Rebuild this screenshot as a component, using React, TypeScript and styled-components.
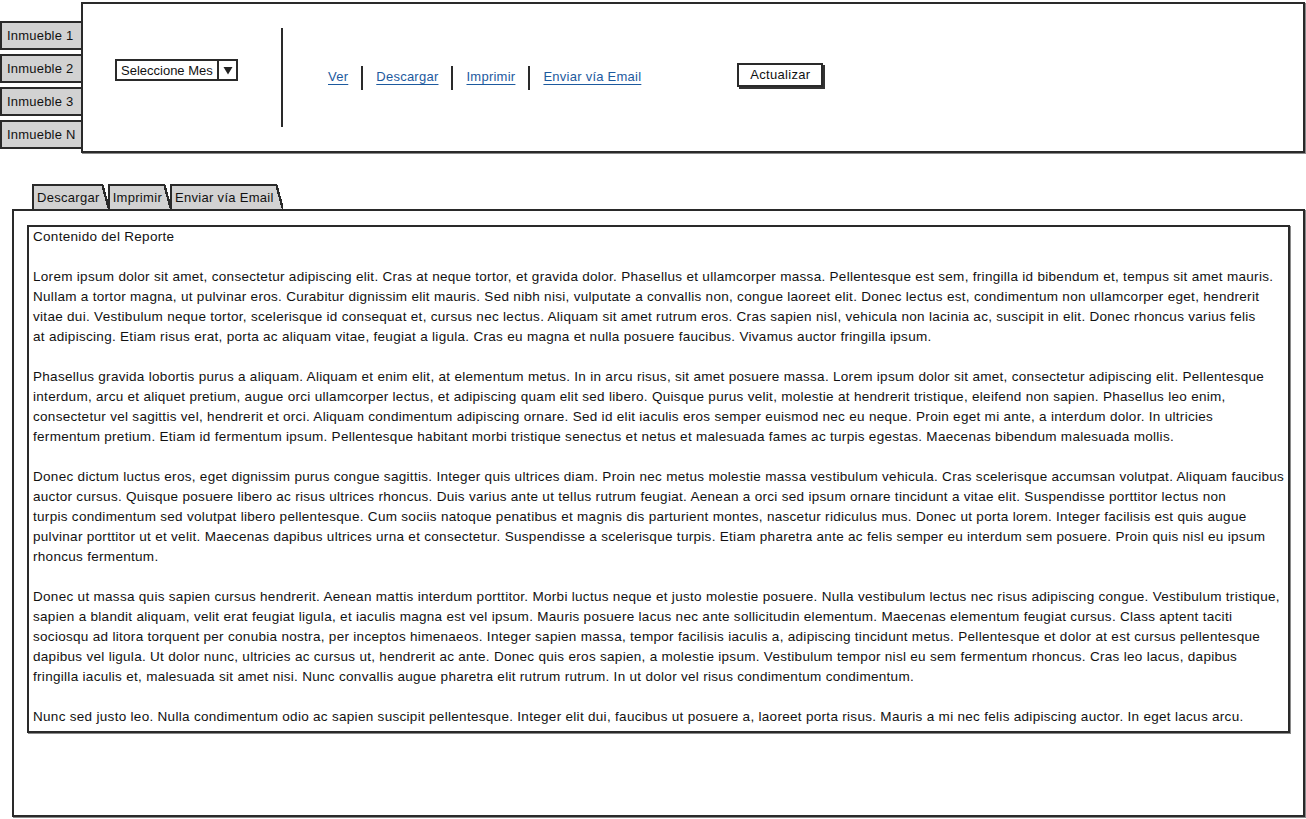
import styled, { createGlobalStyle } from "styled-components"

const GlobalStyle = createGlobalStyle`
  body {
    margin: 0;
    background: #fff;
    font-family: "Liberation Sans", Arial, sans-serif;
    color: #111;
  }
`

const ink = "#2a2a2a"
const tabGray = "#d2d2d2"

const Page = styled.div`
  width: 1306px;
  height: 819px;
  overflow: hidden;
  font-size: 13px;
  letter-spacing: 0.2px;
`

const Header = styled.div`
  display: flex;
  align-items: flex-start;
`

const SideTabs = styled.div`
  width: 81px;
  margin-top: 21px;
  display: flex;
  flex-direction: column;
  gap: 4px;
`

const SideTab = styled.div`
  height: 29px;
  box-sizing: border-box;
  border: 2px solid ${ink};
  border-right: none;
  background: ${tabGray};
  display: flex;
  align-items: center;
  padding-left: 5px;
  white-space: nowrap;
`

const TopPanel = styled.div`
  margin-top: 2px;
  width: 1224px;
  height: 151px;
  box-sizing: border-box;
  border: 2px solid ${ink};
  box-shadow: 1px 1px 0 #8a8a8a;
  display: flex;
  align-items: center;
  padding-left: 32px;
`

const Select = styled.div`
  display: flex;
  align-items: stretch;
  height: 22px;
  width: 123px;
  box-sizing: border-box;
  border: 2px solid ${ink};
  margin-bottom: 15px;
  letter-spacing: 0;
`

const SelectLabel = styled.span`
  flex: 1;
  display: flex;
  align-items: center;
  padding-left: 4px;
  white-space: nowrap;
`

const SelectArrow = styled.span`
  width: 17px;
  border-left: 2px solid ${ink};
  display: flex;
  align-items: center;
  justify-content: center;
`

const Divider = styled.div`
  width: 2px;
  height: 99px;
  background: ${ink};
  margin: 0 45px 0 43px;
`

const Links = styled.div`
  display: flex;
  align-items: center;
  gap: 13px;
  letter-spacing: 0.25px;
  margin-bottom: 3px;
`

const Link = styled.a`
  color: #1d5a9e;
  text-decoration: underline;
  text-underline-offset: 3px;
  cursor: pointer;
`

const Sep = styled.span`
  width: 2px;
  height: 24px;
  margin-top: 4px;
  background: ${ink};
`

const Button = styled.button`
  margin-left: 96px;
  margin-bottom: 6px;
  height: 24px;
  width: 86px;
  box-sizing: border-box;
  border: 2px solid ${ink};
  background: #fff;
  box-shadow: 2px 2px 0 #333;
  font-family: inherit;
  font-size: 13px;
  letter-spacing: 0.3px;
  color: #111;
  padding: 0;
`

const TabRow = styled.div`
  margin-top: 31px;
  padding-left: 32px;
  display: flex;
  height: 25px;
`

const Tab = styled.div`
  position: relative;
  height: 25px;
  box-sizing: border-box;
  border-top: 2px solid ${ink};
  border-left: 2px solid ${ink};
  background: ${tabGray};
  padding: 4px 2px 0 3px;
  margin-right: 6px;
  letter-spacing: 0.3px;
  white-space: nowrap;

  &::after {
    content: "";
    position: absolute;
    top: -2px;
    right: -7px;
    width: 7px;
    height: 25px;
    background: linear-gradient(
      to top right,
      ${tabGray} calc(50% - 1.2px),
      ${ink} calc(50% - 1.2px),
      ${ink} calc(50% + 1.2px),
      transparent calc(50% + 1.2px)
    );
  }
`

const ContentPanel = styled.div`
  margin-left: 12px;
  width: 1293px;
  height: 608px;
  box-sizing: border-box;
  border: 2px solid ${ink};
  box-shadow: 1px 1px 0 #8a8a8a;
  padding: 14px 13px 0 13px;
`

const TextBox = styled.div`
  height: 508px;
  box-sizing: border-box;
  border: 2px solid ${ink};
  box-shadow: 1px 1px 0 #8a8a8a;
  padding: 0 4px;
  font-size: 13.5px;
  letter-spacing: 0.3px;
  line-height: 20px;
`

const Paragraph = styled.div`
  margin-bottom: 20px;
  &:last-child {
    margin-bottom: 0;
  }
`

const Line = styled.div`
  white-space: nowrap;
`

const report: string[][] = [
  ["Contenido del Reporte"],
  [
    "Lorem ipsum dolor sit amet, consectetur adipiscing elit. Cras at neque tortor, et gravida dolor. Phasellus et ullamcorper massa. Pellentesque est sem, fringilla id bibendum et, tempus sit amet mauris.",
    "Nullam a tortor magna, ut pulvinar eros. Curabitur dignissim elit mauris. Sed nibh nisi, vulputate a convallis non, congue laoreet elit. Donec lectus est, condimentum non ullamcorper eget, hendrerit",
    "vitae dui. Vestibulum neque tortor, scelerisque id consequat et, cursus nec lectus. Aliquam sit amet rutrum eros. Cras sapien nisl, vehicula non lacinia ac, suscipit in elit. Donec rhoncus varius felis",
    "at adipiscing. Etiam risus erat, porta ac aliquam vitae, feugiat a ligula. Cras eu magna et nulla posuere faucibus. Vivamus auctor fringilla ipsum.",
  ],
  [
    "Phasellus gravida lobortis purus a aliquam. Aliquam et enim elit, at elementum metus. In in arcu risus, sit amet posuere massa. Lorem ipsum dolor sit amet, consectetur adipiscing elit. Pellentesque",
    "interdum, arcu et aliquet pretium, augue orci ullamcorper lectus, et adipiscing quam elit sed libero. Quisque purus velit, molestie at hendrerit tristique, eleifend non sapien. Phasellus leo enim,",
    "consectetur vel sagittis vel, hendrerit et orci. Aliquam condimentum adipiscing ornare. Sed id elit iaculis eros semper euismod nec eu neque. Proin eget mi ante, a interdum dolor. In ultricies",
    "fermentum pretium. Etiam id fermentum ipsum. Pellentesque habitant morbi tristique senectus et netus et malesuada fames ac turpis egestas. Maecenas bibendum malesuada mollis.",
  ],
  [
    "Donec dictum luctus eros, eget dignissim purus congue sagittis. Integer quis ultrices diam. Proin nec metus molestie massa vestibulum vehicula. Cras scelerisque accumsan volutpat. Aliquam faucibus",
    "auctor cursus. Quisque posuere libero ac risus ultrices rhoncus. Duis varius ante ut tellus rutrum feugiat. Aenean a orci sed ipsum ornare tincidunt a vitae elit. Suspendisse porttitor lectus non",
    "turpis condimentum sed volutpat libero pellentesque. Cum sociis natoque penatibus et magnis dis parturient montes, nascetur ridiculus mus. Donec ut porta lorem. Integer facilisis est quis augue",
    "pulvinar porttitor ut et velit. Maecenas dapibus ultrices urna et consectetur. Suspendisse a scelerisque turpis. Etiam pharetra ante ac felis semper eu interdum sem posuere. Proin quis nisl eu ipsum",
    "rhoncus fermentum.",
  ],
  [
    "Donec ut massa quis sapien cursus hendrerit. Aenean mattis interdum porttitor. Morbi luctus neque et justo molestie posuere. Nulla vestibulum lectus nec risus adipiscing congue. Vestibulum tristique,",
    "sapien a blandit aliquam, velit erat feugiat ligula, et iaculis magna est vel ipsum. Mauris posuere lacus nec ante sollicitudin elementum. Maecenas elementum feugiat cursus. Class aptent taciti",
    "sociosqu ad litora torquent per conubia nostra, per inceptos himenaeos. Integer sapien massa, tempor facilisis iaculis a, adipiscing tincidunt metus. Pellentesque et dolor at est cursus pellentesque",
    "dapibus vel ligula. Ut dolor nunc, ultricies ac cursus ut, hendrerit ac ante. Donec quis eros sapien, a molestie ipsum. Vestibulum tempor nisl eu sem fermentum rhoncus. Cras leo lacus, dapibus",
    "fringilla iaculis et, malesuada sit amet nisi. Nunc convallis augue pharetra elit rutrum rutrum. In ut dolor vel risus condimentum condimentum.",
  ],
  [
    "Nunc sed justo leo. Nulla condimentum odio ac sapien suscipit pellentesque. Integer elit dui, faucibus ut posuere a, laoreet porta risus. Mauris a mi nec felis adipiscing auctor. In eget lacus arcu.",
  ],
]

const inmuebles = ["Inmueble 1", "Inmueble 2", "Inmueble 3", "Inmueble N"]
const actions = ["Ver", "Descargar", "Imprimir", "Enviar vía Email"]
const reportTabs = ["Descargar", "Imprimir", "Enviar vía Email"]

function App() {
  return (
    <>
      <GlobalStyle />
      <Page>
        <Header>
          <SideTabs>
            {inmuebles.map((name) => (
              <SideTab key={name}>{name}</SideTab>
            ))}
          </SideTabs>
          <TopPanel>
            <Select>
              <SelectLabel>Seleccione Mes</SelectLabel>
              <SelectArrow>
                <svg width="10" height="9" viewBox="0 0 10 9">
                  <path d="M0.5 1 L9.5 1 L5 8.5 Z" fill="#222" />
                </svg>
              </SelectArrow>
            </Select>
            <Divider />
            <Links>
              {actions.flatMap((a, i) =>
                i > 0 ? [<Sep key={"s" + a} />, <Link key={a}>{a}</Link>] : [<Link key={a}>{a}</Link>]
              )}
            </Links>
            <Button>Actualizar</Button>
          </TopPanel>
        </Header>

        <TabRow>
          {reportTabs.map((t) => (
            <Tab key={t}>{t}</Tab>
          ))}
        </TabRow>
        <ContentPanel>
          <TextBox>
            {report.map((lines, p) => (
              <Paragraph key={p}>
                {lines.map((l, i) => (
                  <Line key={i}>{l}</Line>
                ))}
              </Paragraph>
            ))}
          </TextBox>
        </ContentPanel>
      </Page>
    </>
  )
}

export default App
